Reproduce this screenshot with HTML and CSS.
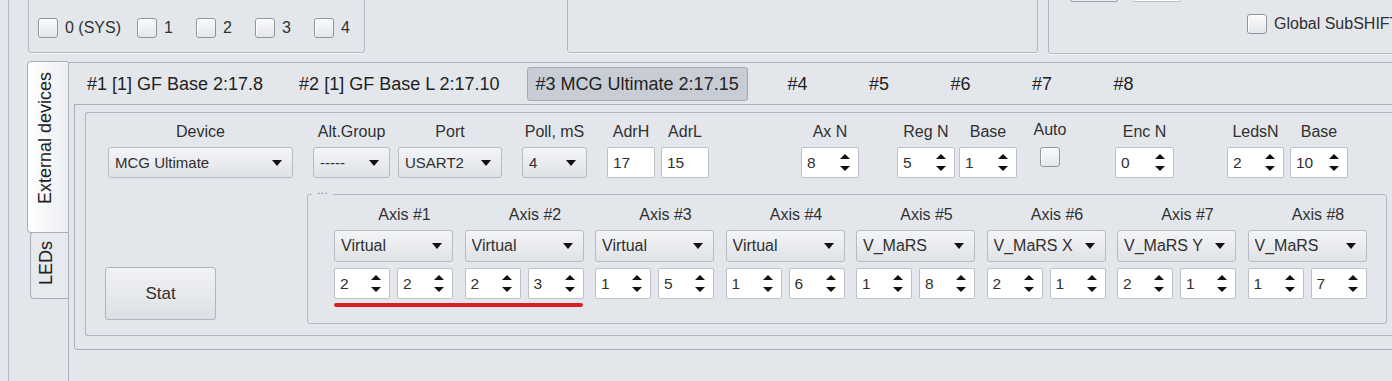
FILE: index.html
```html
<!doctype html>
<html>
<head>
<meta charset=utf-8>
<title>External devices</title>
<link rel="stylesheet" href="styles.css">
</head>
<body>
<div class=frame>

<div class=top>
  <div class="group g-channels">
    <label class=cb><span class=box></span>0 (SYS)</label>
    <label class="cb short"><span class=box></span>1</label>
    <label class="cb short"><span class=box></span>2</label>
    <label class="cb short"><span class=box></span>3</label>
    <label class="cb short"><span class=box></span>4</label>
  </div>
  <div class="group g-empty"></div>
  <div class="group g-shift">
    <div class=mini-fields><span class="mini dark"></span><span class=mini></span></div>
    <label class="cb shift"><span class=box></span>Global SubSHIFT</label>
  </div>
</div>

<div class=vtabs>
  <div class=vtab-strip>
    <div class="vtab on"><span>External devices</span></div>
    <div class=vtab><span>LEDs</span></div>
  </div>

  <div class=vtab-body>
    <div class=htab-strip>
      <div class=htab><span>#1 [1] GF Base 2:17.8</span></div>
      <div class=htab><span>#2 [1] GF Base L 2:17.10</span></div>
      <div class="htab on"><span>#3 MCG Ultimate 2:17.15</span></div>
      <div class=htab><span>#4</span></div>
      <div class=htab><span>#5</span></div>
      <div class=htab><span>#6</span></div>
      <div class=htab><span>#7</span></div>
      <div class=htab><span>#8</span></div>
    </div>

    <div class=htab-body>
      <div class=dev-panel>

        <div class=dev-row>
          <div class="field f-device"><div class=lbl>Device</div><div class=combo><span>MCG Ultimate</span><i></i></div></div>
          <div class="field f-alt"><div class=lbl>Alt.Group</div><div class=combo><span>-----</span><i></i></div></div>
          <div class="field f-port"><div class=lbl>Port</div><div class=combo><span>USART2</span><i></i></div></div>
          <div class="field f-poll"><div class=lbl>Poll, mS</div><div class=combo><span>4</span><i></i></div></div>
          <div class="field f-adrh"><div class=lbl>AdrH</div><div class=edit>17</div></div>
          <div class="field f-adrl"><div class=lbl>AdrL</div><div class=edit>15</div></div>
          <div class="field f-axn"><div class=lbl>Ax N</div><div class=spin><span>8</span><i></i></div></div>
          <div class="field f-regn"><div class=lbl>Reg N</div><div class=spin><span>5</span><i></i></div></div>
          <div class="field f-regb"><div class=lbl>Base</div><div class=spin><span>1</span><i></i></div></div>
          <div class="field f-auto"><div class=lbl>Auto</div><span class=box></span></div>
          <div class="field f-enc"><div class=lbl>Enc N</div><div class=spin><span>0</span><i></i></div></div>
          <div class="field f-leds"><div class=lbl>LedsN</div><div class=spin><span>2</span><i></i></div></div>
          <div class="field f-ledb"><div class=lbl>Base</div><div class=spin><span>10</span><i></i></div></div>
        </div>

        <div class=dev-lower>
          <button class=stat>Stat</button>

          <fieldset class=axes>
            <legend><span>...</span></legend>
            <div class=axis-grid>
              <div class=axis>
                <div class=lbl>Axis #1</div>
                <div class=combo><span>Virtual</span><i></i></div>
                <div class=pair><div class=spin><span>2</span><i></i></div><div class=spin><span>2</span><i></i></div></div>
              </div>
              <div class=axis>
                <div class=lbl>Axis #2</div>
                <div class=combo><span>Virtual</span><i></i></div>
                <div class=pair><div class=spin><span>2</span><i></i></div><div class=spin><span>3</span><i></i></div></div>
              </div>
              <div class=axis>
                <div class=lbl>Axis #3</div>
                <div class=combo><span>Virtual</span><i></i></div>
                <div class=pair><div class=spin><span>1</span><i></i></div><div class=spin><span>5</span><i></i></div></div>
              </div>
              <div class=axis>
                <div class=lbl>Axis #4</div>
                <div class=combo><span>Virtual</span><i></i></div>
                <div class=pair><div class=spin><span>1</span><i></i></div><div class=spin><span>6</span><i></i></div></div>
              </div>
              <div class=axis>
                <div class=lbl>Axis #5</div>
                <div class=combo><span>V_MaRS</span><i></i></div>
                <div class=pair><div class=spin><span>1</span><i></i></div><div class=spin><span>8</span><i></i></div></div>
              </div>
              <div class=axis>
                <div class=lbl>Axis #6</div>
                <div class=combo><span>V_MaRS X</span><i></i></div>
                <div class=pair><div class=spin><span>2</span><i></i></div><div class=spin><span>1</span><i></i></div></div>
              </div>
              <div class=axis>
                <div class=lbl>Axis #7</div>
                <div class=combo><span>V_MaRS Y</span><i></i></div>
                <div class=pair><div class=spin><span>2</span><i></i></div><div class=spin><span>1</span><i></i></div></div>
              </div>
              <div class=axis>
                <div class=lbl>Axis #8</div>
                <div class=combo><span>V_MaRS</span><i></i></div>
                <div class=pair><div class=spin><span>1</span><i></i></div><div class=spin><span>7</span><i></i></div></div>
              </div>
            </div>
            <div class=mark></div>
          </fieldset>
        </div>

      </div>
    </div>
  </div>
</div>

</div>
</body>
</html>
```

FILE: styles.css
```css
body {
  margin: 0;
  height: 381px;
  overflow: hidden;
  background: #e3e7ec;
  font-family: "Liberation Sans", Arial, sans-serif;
  font-size: 16px;
  color: #303030;
}

.frame {
  margin-left: 8px;
  height: 381px;
  border-left: 1px solid #b4bac2;
}

/* top strip, group boxes cut by the window edge */
.top {
  display: flex;
  height: 61px;
}
.group {
  box-sizing: border-box;
  flex: none;
  height: 80px;
  margin-top: -27px;
  border: 1px solid #b1b7c0;
  border-radius: 3px;
  box-shadow: 0 1px 0 #f4f6f8;
  display: flex;
  align-items: flex-end;
}
.g-channels {
  width: 337px;
  margin-left: 19px;
  padding: 0 0 14px 9px;
}
.g-empty {
  width: 471px;
  margin-left: 202px;
}
.g-shift {
  width: 400px;
  height: 81px;
  margin-left: 10px;
  padding: 0 0 19px 21px;
  flex-direction: column;
  align-items: flex-start;
  justify-content: flex-end;
}

.cb {
  display: flex;
  align-items: center;
  gap: 7px;
  white-space: nowrap;
}
.cb + .cb { margin-left: 16px; }
.cb.short { min-width: 43px; }
.cb.shift { margin-left: 177px; }

.box {
  box-sizing: border-box;
  display: block;
  width: 20px;
  height: 20px;
  border: 1px solid #8f959d;
  border-radius: 3px;
  background: linear-gradient(#fbfbfc, #e3e6ea);
  box-shadow: inset 1px 1px 0 #fff;
}

.mini-fields {
  display: flex;
  gap: 15px;
  margin-bottom: 12px;
}
.mini {
  box-sizing: border-box;
  width: 48px;
  height: 30px;
  border: 1px solid #b9bfc7;
  border-radius: 2px;
  background: #fff;
}
.mini.dark {
  border-color: #9aa1ab;
  background: #eef0f3;
}

/* tabs on the left */
.vtabs {
  display: flex;
  height: 320px;
}
.vtab-strip {
  flex: none;
  width: 41px;
  margin-left: 18px;
  display: flex;
  flex-direction: column;
}
.vtab {
  box-sizing: border-box;
  display: flex;
  align-items: center;
  justify-content: center;
  border: 1px solid #a9afb8;
  border-right: 0;
  border-radius: 4px 0 0 4px;
  font-size: 18px;
  color: #222;
}
.vtab span {
  writing-mode: vertical-rl;
  transform: rotate(180deg);
  white-space: nowrap;
}
.vtab.on {
  height: 172px;
  padding: 0 6px 18px 0;
  background: linear-gradient(to right, #ffffff, #eceef2);
}
.vtab:not(.on) {
  height: 67px;
  margin-left: 3px;
  margin-top: -1px;
  padding: 0 6px 4px 0;
  background: #e6e9ee;
}

.vtab-body {
  flex: 1;
  margin-top: 1px;
  border-left: 1px solid #a9afb8;
  border-top: 1px solid #a9afb8;
}

/* device tabs on top */
.htab-strip {
  display: flex;
  height: 41px;
}
.htab {
  box-sizing: border-box;
  min-width: 81.5px;
  padding: 0 9px;
  font-size: 18px;
  color: #222;
  text-align: center;
  white-space: nowrap;
}
.htab span {
  box-sizing: border-box;
  display: block;
  height: 34px;
  margin-top: 4px;
  padding: 0 8px;
  line-height: 32px;
  border: 1px solid transparent;
  border-radius: 3px;
}
.htab.on span {
  background: #c8cdd5;
  border-color: #a3aab4;
}

.htab-body {
  margin: 0 -12px 0 5px;
  padding-bottom: 13px;
  border: 1px solid #a9afb8;
  border-right: 0;
  border-radius: 0 0 0 4px;
}

.dev-panel {
  margin: 7px 0 0 10px;
  padding: 9px 0 11px;
  border: 1px solid #b1b7c0;
  border-right: 0;
  border-radius: 3px 0 0 3px;
}

.lbl {
  line-height: 19px;
  white-space: nowrap;
}

.dev-row {
  display: flex;
  align-items: flex-start;
}
.field {
  flex: none;
  display: flex;
  flex-direction: column;
  align-items: center;
}
.field > .combo,
.field > .spin,
.field > .edit,
.field > .box {
  margin-top: 6px;
}
.field > .combo,
.field > .spin,
.field > .edit {
  width: 100%;
}
.field > .combo { font-size: 15px; }
.f-device { width: 185px; margin-left: 22px; }
.f-alt { width: 77px; margin-left: 20px; }
.f-port { width: 104px; margin-left: 8px; }
.f-poll { width: 65px; margin-left: 20px; }
.f-adrh { width: 48px; margin-left: 20px; }
.f-adrl { width: 48px; margin-left: 6px; }
.f-axn { width: 58px; margin-left: 92px; }
.f-regn { width: 58px; margin-left: 38px; }
.f-regb { width: 58px; margin-left: 4px; }
.f-auto { width: 40px; margin-left: 13px; }
.f-auto .lbl { margin: -2px 0 2px; }
.f-enc { width: 59px; margin-left: 45px; }
.f-leds { width: 57px; margin-left: 53px; }
.f-ledb { width: 58px; margin-left: 6px; }

/* controls */
.combo {
  box-sizing: border-box;
  height: 31px;
  display: flex;
  align-items: center;
  padding: 0 10px 0 6px;
  border: 1px solid #b6bcc4;
  border-radius: 3px;
  background: linear-gradient(#f4f5f7, #dfe2e6);
  font-size: 15.5px;
}
.combo span {
  flex: 1;
  white-space: nowrap;
  overflow: hidden;
}
.combo i {
  flex: none;
  width: 0;
  height: 0;
  border-left: 5.5px solid transparent;
  border-right: 5.5px solid transparent;
  border-top: 6px solid #111;
}

.spin,
.edit {
  box-sizing: border-box;
  height: 31px;
  display: flex;
  align-items: center;
  padding: 0 8px 0 5px;
  background: #fff;
  border: 1px solid #bcc2ca;
  border-radius: 2px;
  font-size: 15.5px;
}
.spin span { flex: 1; }
.spin i {
  flex: none;
  display: flex;
  flex-direction: column;
  gap: 7px;
}
.spin i::before,
.spin i::after {
  content: "";
  border-left: 5px solid transparent;
  border-right: 5px solid transparent;
}
.spin i::before { border-bottom: 5px solid #111; }
.spin i::after { border-top: 5px solid #111; }

.dev-lower {
  display: flex;
  align-items: flex-end;
  margin-top: 11px;
}

.stat {
  flex: none;
  width: 111px;
  height: 53px;
  margin: 0 0 4px 19px;
  padding: 0;
  border: 1px solid #b0b6bf;
  border-radius: 3px;
  background: linear-gradient(#f1f2f5, #dce0e5);
  font-family: inherit;
  font-size: 17px;
  color: #303030;
}

.axes {
  box-sizing: border-box;
  flex: none;
  width: 1080px;
  min-width: 0;
  margin: 0 0 0 91px;
  padding: 5px 0 16px 26px;
  border: 1px solid #b1b7c0;
  border-radius: 3px;
}
.axes legend {
  height: 11px;
  margin-left: -22px;
  padding: 0 5px;
  font-size: 13px;
  line-height: 11px;
  color: #8a8f96;
}
.axes legend span {
  position: relative;
  top: -5px;
}

.axis-grid {
  display: grid;
  grid-template-columns: repeat(8, 119px);
  column-gap: 11.5px;
}
.axis .lbl {
  padding-left: 22px;
  text-align: center;
}
.axis .combo {
  height: 32px;
  margin-top: 6px;
  font-size: 16px;
}
.pair {
  display: grid;
  grid-template-columns: 1fr 1fr;
  gap: 7px;
  margin-top: 6px;
}

.mark {
  width: 249px;
  height: 4px;
  margin-top: 4px;
  border-radius: 2px;
  background: #dc1f27;
}
```
